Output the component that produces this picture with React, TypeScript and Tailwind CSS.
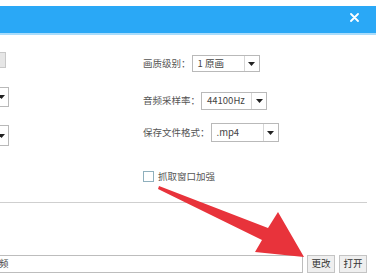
import React from 'react';

const font = {fontFamily: '"Noto Sans CJK SC", "Noto Sans", sans-serif'};

const Caret: React.FC = () => (
  <svg width="7" height="4" viewBox="0 0 7 4">
    <path d="M0 0h7L3.5 4z" fill="#222" />
  </svg>
);

interface SelectProps {
  value?: string;
  width: string;
  height?: string;
}

const Select: React.FC<SelectProps> = ({value, width, height = 'h-[18px]'}) => (
  <div className={`flex shrink-0 items-stretch border border-[#b9b9b9] bg-white ${width} ${height}`}>
    <div className="flex flex-1 items-center pl-[5px] text-[9.5px] leading-none text-[#444]">{value}</div>
    <div className="flex w-[15px] items-center justify-center border-l border-[#d6d6d6]">
      <Caret />
    </div>
  </div>
);

const Row: React.FC<{label: string; children: React.ReactNode}> = ({label, children}) => (
  <div className="flex items-center gap-[1px]">
    <span className="whitespace-nowrap text-[9.5px] leading-none text-[#555]">{label}</span>
    {children}
  </div>
);

const App: React.FC = () => {
  return (
    <div className="relative h-[274px] w-[376px] overflow-hidden bg-white" style={font}>
      <div className="h-[6px]" />
      {/* title bar */}
      <div className="flex h-[29px] items-start justify-end border-b-2 border-[#a9dcfb] bg-[#2aa8f6] pr-[17px] pt-[7px]">
        <svg width="9" height="9" viewBox="0 0 9 9">
          <path d="M1 1l7 7M8 1L1 8" stroke="#fff" strokeWidth="1.8" strokeLinecap="round" />
        </svg>
      </div>

      {/* settings */}
      <div className="flex h-[167px]">
        <div className="flex w-[9px] shrink-0 flex-col items-end">
          <div className="mr-[3px] mt-[17px] h-[16px] w-[30px] shrink-0 border border-[#c8c8c8] bg-[#e6e6e6]" />
          <div className="mt-[19px] shrink-0">
            <Select width="w-[60px]" height="h-[20px]" />
          </div>
          <div className="mt-[18px] shrink-0">
            <Select width="w-[60px]" height="h-[21px]" />
          </div>
        </div>

        <div className="ml-[134px] flex flex-col">
          <div className="mt-[20px]">
            <Row label="画质级别：">
              <Select value="1 原画" width="w-[68px]" height="h-[17px]" />
            </Row>
          </div>
          <div className="mt-[20px]">
            <Row label="音频采样率：">
              <Select value="44100Hz" width="w-[66px]" height="h-[18px]" />
            </Row>
          </div>
          <div className="mt-[13px]">
            <Row label="保存文件格式：">
              <Select value=".mp4" width="w-[68px]" height="h-[19px]" />
            </Row>
          </div>
          <div className="mt-[29px] flex items-center gap-[4px]">
            <div className="h-[11px] w-[11px] border border-[#8fb0bd] bg-white" />
            <span className="text-[9.5px] leading-none text-[#555]">抓取窗口加强</span>
          </div>
        </div>
      </div>

      <div className="mr-[9px] h-px bg-[#cfcfcf]" />

      {/* output path */}
      <div className="mt-[52px] flex h-[18px] items-stretch gap-[4px] pr-[9px]">
        <div className="-ml-[2px] flex flex-1 items-center border border-[#bdbdbd] bg-white text-[9.5px] leading-none text-[#444]">
          频
        </div>
        <button className="w-[28px] border border-[#c4c4c4] bg-[#efefef] text-[9.5px] leading-none text-[#333]">更改</button>
        <button className="w-[28px] border border-[#c4c4c4] bg-[#efefef] text-[9.5px] leading-none text-[#333]">打开</button>
      </div>

      {/* red annotation arrow */}
      <svg className="pointer-events-none absolute left-0 top-0" width="376" height="274" viewBox="0 0 376 274">
        <polygon
          points="159,186 268,228 278,212 304,257 255,252 262,240 158,189"
          fill="#e8333b"
        />
      </svg>
    </div>
  );
};

export default App;
